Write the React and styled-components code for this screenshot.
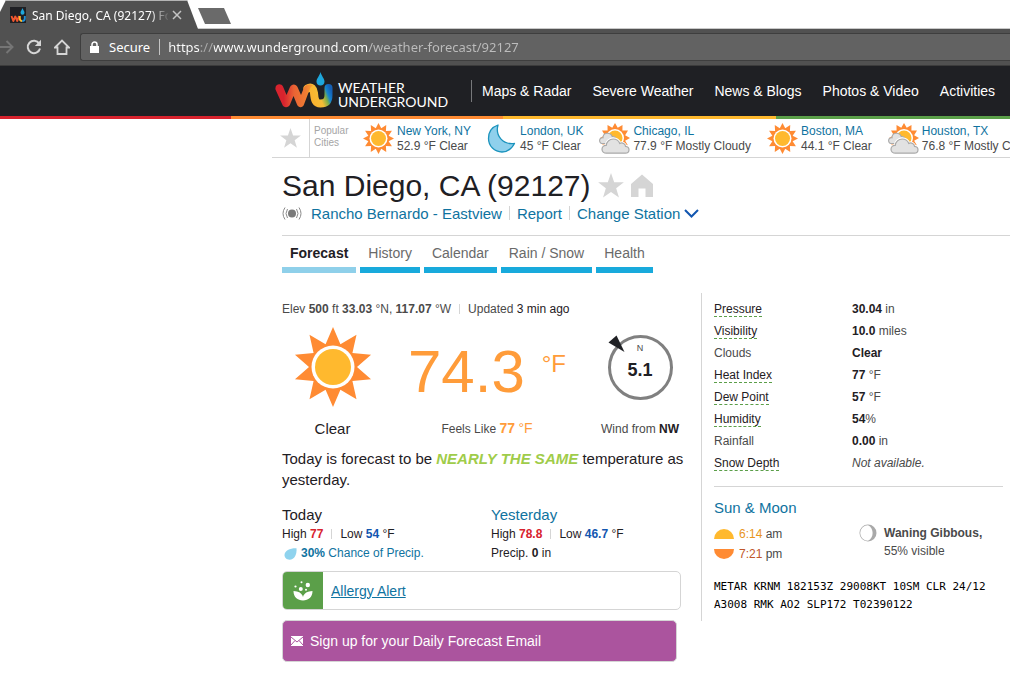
import React from 'react'

import styled, { createGlobalStyle } from 'styled-components'

const cities = [
    { name: 'New York, NY', now: '52.9 °F Clear', icon: 'sun' },
    { name: 'London, UK', now: '45 °F Clear', icon: 'moon' },
    { name: 'Chicago, IL', now: '77.9 °F Mostly Cloudy', icon: 'cloud' },
    { name: 'Boston, MA', now: '44.1 °F Clear', icon: 'sun' },
    { name: 'Houston, TX', now: '76.8 °F Mostly Cloudy', icon: 'cloud' },
]

const navItems = ['Maps & Radar', 'Severe Weather', 'News & Blogs', 'Photos & Video', 'Activities']

const tabs = ['Forecast', 'History', 'Calendar', 'Rain / Snow', 'Health']

const details = [
    { label: 'Pressure', value: '30.04', unit: ' in', help: true },
    { label: 'Visibility', value: '10.0', unit: ' miles', help: true },
    { label: 'Clouds', value: 'Clear', unit: '' },
    { label: 'Heat Index', value: '77', unit: ' °F', help: true },
    { label: 'Dew Point', value: '57', unit: ' °F', help: true },
    { label: 'Humidity', value: '54', unit: '%', help: true },
    { label: 'Rainfall', value: '0.00', unit: ' in' },
    { label: 'Snow Depth', missing: 'Not available.', help: true },
]

// star polygon with alternating outer and inner radius
function starPoints(cx, cy, outer, inner, count) {
    const points = []
    for (let i = 0; i < count * 2; i++) {
        const r = i % 2 ? inner : outer
        const a = (Math.PI * i) / count
        points.push(`${(cx + r * Math.sin(a)).toFixed(2)},${(cy - r * Math.cos(a)).toFixed(2)}`)
    }
    return points.join(' ')
}

function SunIcon({ size, rays, notch, ring, core }) {
    const c = size / 2
    return (
        <svg width={size} height={size} viewBox={`0 0 ${size} ${size}`} aria-hidden="true">
            <polygon points={starPoints(c, c, c, notch, rays)} fill="#ff8b33" />
            <circle cx={c} cy={c} r={ring} fill="#fff" />
            <circle cx={c} cy={c} r={core} fill="#ffb92e" />
        </svg>
    )
}

function MoonIcon() {
    return (
        <svg width="30" height="31" viewBox="0 0 30 31" aria-hidden="true">
            <path
                d="M11 2C8 13 16 22 27.500 20.500C24 27 19.500 29 15 29C7.500 29 1.500 23 1.500 15.500C1.500 9 5 4 11 2Z"
                fill="#8fd0ec"
                stroke="#1b93bd"
                strokeWidth="1.300"
                strokeLinejoin="round"
            />
        </svg>
    )
}

function CloudIcon() {
    return (
        <svg width="31" height="31" viewBox="0 0 31 31" aria-hidden="true">
            <polygon points={starPoints(16, 15, 15, 10.5, 12)} fill="#ff8b33" />
            <circle cx="16" cy="15" r="9" fill="#fff" />
            <circle cx="16" cy="15" r="7.5" fill="#ffb92e" />
            <path
                d="M4 20.500C1.500 20.500 0.500 19 0.600 17.400C0.800 15.500 2.300 14.500 4 14.800C4 12 6 10.200 8.500 10.200C11 10.200 12.500 11.500 13.200 13.500C15.500 13.200 17.500 15 17.500 17.500C17.500 20 16 24 12 25L-1 27V31H31V23Z"
                fill="#fff"
            />
            <path
                d="M4 20.500C1.500 20.500 0.600 19 0.600 17.400C0.800 15.500 2.300 14.500 4 14.800C4 12 6 10.200 8.500 10.200C11 10.200 12.500 11.500 13.200 13.500C15.500 13.200 17.300 15 17.300 17.300C17.300 19.300 15.500 20.500 14 20.500Z"
                fill="#e2e2e2"
                stroke="#a9a9a9"
                strokeWidth="1.100"
            />
            <path
                d="M7.500 30.200C4.700 30.200 3 28.500 3 26.200C3 23.800 4.800 22.200 7.200 22.400C7.500 18.800 10.500 16 14.200 16C17.300 16 19.700 17.700 20.800 20.400C23.500 19.200 26.300 20.800 26.500 23.300C28.800 23.500 30 25 30 26.700C30 28.800 28.500 30.200 26.200 30.200Z"
                fill="#e2e2e2"
                stroke="#fff"
                strokeWidth="3"
            />
            <path
                d="M7.500 30.200C4.700 30.200 3 28.500 3 26.200C3 23.800 4.800 22.200 7.200 22.400C7.500 18.800 10.500 16 14.200 16C17.300 16 19.700 17.700 20.800 20.400C23.500 19.200 26.300 20.800 26.500 23.300C28.800 23.500 30 25 30 26.700C30 28.800 28.500 30.200 26.200 30.200Z"
                fill="#e2e2e2"
                stroke="#a9a9a9"
                strokeWidth="1.200"
            />
        </svg>
    )
}

function CityIcon({ icon }) {
    if (icon === 'moon') return <MoonIcon />
    if (icon === 'cloud') return <CloudIcon />
    return <SunIcon size={31} rays={12} notch={10.5} ring={9} core={7.5} />
}

function LogoMark() {
    return (
        <svg width="58" height="37" viewBox="0 0 58 37" aria-hidden="true">
            <defs>
                <linearGradient id="logo-w" gradientUnits="userSpaceOnUse" x1="2" y1="0" x2="36" y2="0">
                    <stop offset="0" stopColor="#d8232e" />
                    <stop offset="0.200" stopColor="#d8232e" />
                    <stop offset="0.500" stopColor="#ea6334" />
                    <stop offset="0.850" stopColor="#ee7d33" />
                    <stop offset="1" stopColor="#f79a30" />
                </linearGradient>
                <linearGradient id="logo-u" gradientUnits="userSpaceOnUse" x1="36" y1="26" x2="56" y2="18">
                    <stop offset="0" stopColor="#fbb32f" />
                    <stop offset="0.400" stopColor="#f6bd35" />
                    <stop offset="0.650" stopColor="#7fae48" />
                    <stop offset="0.800" stopColor="#1585cf" />
                    <stop offset="1" stopColor="#1560b5" />
                </linearGradient>
            </defs>
            <path
                d="M32.500 16.500C36.500 14 38.500 17 39 21C39.500 28 40.500 31.500 45.500 31.500C51.500 31.500 53.500 28 53.500 23V16"
                fill="none"
                stroke="url(#logo-u)"
                strokeWidth="8"
                strokeLinecap="round"
            />
            <path
                d="M0.500 17.500C-0.500 12 6 10.500 8 14.500L11.500 23L15 15C16.500 11.500 21 11.500 22.500 15L26 23L29 15.500C30.500 12.500 35.500 11.500 38 13.500C35.500 14.500 35 17 33.500 20.500L29 32.500C27.800 36 23.500 36 22 32.500L18.500 24L15 32.500C13.500 36 8.500 36 7.300 32.500Z"
                fill="url(#logo-w)"
            />
            <path d="M45.500 0C46.500 4 49.500 6.500 49.500 9.500C49.500 12 47.800 13.500 45.500 13.500C43.200 13.500 41.500 12 41.500 9.500C41.500 6.500 44.500 4 45.500 0Z" fill="#1ea7dc" />
        </svg>
    )
}

function Favicon() {
    return (
        <svg width="16" height="16" viewBox="0 0 16 16" aria-hidden="true">
            <path d="M0 0H16V16H0Z" fill="#1f2024" />
            <path d="M1.500 9L3.300 14L5.300 9.500L7.300 14L9 9" fill="none" stroke="#f0562f" strokeWidth="1.900" strokeLinejoin="round" />
            <path d="M9.800 9V11.500Q9.800 14 12.200 14" fill="none" stroke="#ffb92e" strokeWidth="1.900" />
            <path d="M12.200 14Q14.800 14 14.800 11.500V9" fill="none" stroke="#1f8fd6" strokeWidth="1.900" />
            <path d="M12.500 1C13 3 14.500 4 14.500 5.700A2 2 0 0 1 10.500 5.700C10.500 4 12 3 12.500 1Z" fill="#1ea7dc" />
        </svg>
    )
}

function StarIcon({ size }) {
    return (
        <svg width={size} height={size} viewBox="0 0 24 24" aria-hidden="true">
            <polygon points={starPoints(12, 12.5, 12.5, 5, 5)} fill="#d5d5d5" />
        </svg>
    )
}

function Browser() {
    return (
        <>
            <TabStrip>
                <BrowserTab>
                    <Favicon />
                    <TabTitle>San Diego, CA (92127) Fo</TabTitle>
                    <IconButton aria-label="Close tab">
                        <svg width="10" height="10" viewBox="0 0 10 10">
                            <path d="M1 1L9 9M9 1L1 9" stroke="#c4c4c4" strokeWidth="1.500" />
                        </svg>
                    </IconButton>
                </BrowserTab>
                <NewTab aria-label="New tab" />
            </TabStrip>
            <Toolbar>
                <IconButton aria-label="Forward">
                    <svg width="14" height="16" viewBox="0 0 14 16">
                        <path d="M0 8H12.500M6.500 2L12.500 8L6.500 14" fill="none" stroke="#757575" strokeWidth="2" />
                    </svg>
                </IconButton>
                <IconButton aria-label="Reload">
                    <svg width="16" height="16" viewBox="0 0 16 16">
                        <path d="M13.200 4.600A6.200 6.200 0 1 0 14 9.500" fill="none" stroke="#d6d6d6" strokeWidth="2" />
                        <path d="M15 0.800V7H8.800Z" fill="#d6d6d6" />
                    </svg>
                </IconButton>
                <IconButton aria-label="Home">
                    <svg width="16" height="16" viewBox="0 0 16 16">
                        <path d="M1 8.500L8 1.500L15 8.500H12.500V15H3.500V8.500Z" fill="none" stroke="#d6d6d6" strokeWidth="1.800" />
                    </svg>
                </IconButton>
                <AddressBar>
                    <svg width="9" height="12" viewBox="0 0 9 12" aria-hidden="true">
                        <path d="M0 5H9V12H0Z" fill="#fff" />
                        <path d="M2 5.500V3.500A2.500 2.500 0 0 1 7 3.500V5.500" fill="none" stroke="#fff" strokeWidth="1.500" />
                    </svg>
                    <Secure htmlFor="address">Secure</Secure>
                    <Address id="address" defaultValue="https://www.wunderground.com/weather-forecast/92127" />
                </AddressBar>
            </Toolbar>
        </>
    )
}

function SiteHeader() {
    return (
        <Header>
            <Logo href="#">
                <LogoMark />
                <LogoText>
                    WEATHER
                    <br />
                    UNDERGROUND
                </LogoText>
            </Logo>
            <Nav>
                {navItems.map((item) => (
                    <a href="#" key={item}>{item}</a>
                ))}
            </Nav>
        </Header>
    )
}

function CityTicker() {
    return (
        <Ticker>
            <Favourites aria-label="Favourites">
                <StarIcon size={21} />
            </Favourites>
            <TickerLabel>
                Popular
                <br />
                Cities
            </TickerLabel>
            <CityList>
                {cities.map((city) => (
                    <City key={city.name}>
                        <CityIcon icon={city.icon} />
                        <div>
                            <a href="#">{city.name}</a>
                            <p>{city.now}</p>
                        </div>
                    </City>
                ))}
            </CityList>
        </Ticker>
    )
}

function Conditions() {
    return (
        <Current>
            <Elevation>
                <span>Elev <b>500</b> ft <b>33.03</b> °N, <b>117.07</b> °W</span>
                <Bar />
                <span>Updated <Dark>3 min ago</Dark></span>
            </Elevation>
            <Readings>
                <SunIcon size={80} rays={10} notch={24} ring={21.5} core={18} />
                <Temp>74.3<sup>°F</sup></Temp>
                <Dial>
                    <Arrow width="17" height="18" viewBox="0 0 17 18" aria-hidden="true">
                        <polygon points="8.500,0.500 0.500,7.500 16.500,17" fill="#1f2024" />
                    </Arrow>
                    <span>N</span>
                    <strong>5.1</strong>
                </Dial>
                <Sky>Clear</Sky>
                <Feels>Feels Like <b>77</b> <i>°F</i></Feels>
                <Wind>Wind from <b>NW</b></Wind>
            </Readings>
            <Outlook>
                Today is forecast to be <em>NEARLY THE SAME</em> temperature as yesterday.
            </Outlook>
            <Days>
                <Day>
                    <h3>Today</h3>
                    <p>High <Hot>77</Hot><Bar />Low <Cold>54</Cold> °F</p>
                    <Precip href="#">
                        <svg width="13" height="12" viewBox="0 0 13 12" aria-hidden="true">
                            <path d="M12.500 0.300C13 6.500 10.500 11.700 5.500 11.700C2.500 11.700 0.500 9.700 0.500 7C0.500 2.500 6.500 0 12.500 0.300Z" fill="#8fd3ee" />
                        </svg>
                        <span><b>30%</b> Chance of Precip.</span>
                    </Precip>
                </Day>
                <Day>
                    <h3><a href="#">Yesterday</a></h3>
                    <p>High <Hot>78.8</Hot><Bar />Low <Cold>46.7</Cold> °F</p>
                    <p>Precip. <b>0</b> in</p>
                </Day>
            </Days>
            <Allergy>
                <AllergyIcon>
                    <svg width="20" height="20" viewBox="0 0 20 20" aria-hidden="true">
                        <path d="M0.500 10C5.500 10.300 9 12 10 16C11 12 14.500 10.300 19.500 10C19.500 16 15.500 19.500 10 19.500C4.500 19.500 0.500 16 0.500 10Z" fill="#fff" />
                        <circle cx="14.800" cy="4" r="2.200" fill="#fff" />
                        <circle cx="8.500" cy="1.300" r="1" fill="#fff" />
                        <circle cx="2.500" cy="5.500" r="1.100" fill="#fff" />
                        <circle cx="7.800" cy="8" r="2" fill="#fff" />
                        <circle cx="13" cy="8.700" r="1" fill="#fff" />
                    </svg>
                </AllergyIcon>
                <a href="#">Allergy Alert</a>
            </Allergy>
            <SignUp>
                <svg width="12" height="10" viewBox="0 0 12 10" aria-hidden="true">
                    <path d="M0 0H12V10H0Z" fill="#fff" />
                    <path d="M0 1L6 6L12 1M0 9L4 4.500M12 9L8 4.500" fill="none" stroke="#ab549e" />
                </svg>
                Sign up for your Daily Forecast Email
            </SignUp>
        </Current>
    )
}

function Details() {
    return (
        <Side>
            <DetailTable>
                <tbody>
                    {details.map((row) => (
                        <tr key={row.label}>
                            <th scope="row">{row.help ? <Help>{row.label}</Help> : row.label}</th>
                            <td>{row.missing ? <i>{row.missing}</i> : <><b>{row.value}</b>{row.unit}</>}</td>
                        </tr>
                    ))}
                </tbody>
            </DetailTable>
            <SunMoon>
                <h3><a href="#">Sun &amp; Moon</a></h3>
                <div>
                    <SunTime $color="#e8951c">
                        <svg width="20" height="10" viewBox="0 0 20 10" aria-hidden="true">
                            <path d="M0 10A10 10 0 0 1 20 10Z" fill="#ffb92e" />
                        </svg>
                        <span><b>6:14</b> am</span>
                    </SunTime>
                    <SunTime $color="#c0562a">
                        <svg width="20" height="10" viewBox="0 0 20 10" aria-hidden="true">
                            <path d="M0 0A10 10 0 0 0 20 0Z" fill="#ff8b33" />
                        </svg>
                        <span><b>7:21</b> pm</span>
                    </SunTime>
                </div>
                <Phase>
                    <svg width="18" height="18" viewBox="0 0 18 18" aria-hidden="true">
                        <circle cx="9" cy="9" r="8.500" fill="#a9a9a9" />
                        <path d="M9 1.200A7.800 7.800 0 0 0 9 16.800C15.200 14 15.200 4 9 1.200Z" fill="#fff" />
                    </svg>
                    <p><b>Waning Gibbous,</b><br />55% visible</p>
                </Phase>
            </SunMoon>
            <Metar>METAR KRNM 182153Z 29008KT 10SM CLR 24/12 A3008 RMK AO2 SLP172 T02390122</Metar>
        </Side>
    )
}

function App() {
    return (
        <>
            <GlobalStyle />
            <Browser />
            <SiteHeader />
            <CityTicker />
            <Main>
                <TitleRow>
                    <h1>San Diego, CA (92127)</h1>
                    <IconButton aria-label="Add to favourites"><StarIcon size={26} /></IconButton>
                    <IconButton aria-label="Set as home">
                        <svg width="22" height="24" viewBox="0 0 22 24">
                            <path d="M11 0.500L22 10V23H14.500V14.500H7.500V23H0V10Z" fill="#d5d5d5" />
                        </svg>
                    </IconButton>
                </TitleRow>
                <Station>
                    <svg width="20" height="14" viewBox="0 0 20 14" aria-hidden="true">
                        <circle cx="10" cy="7.500" r="4" fill="#7a7a7a" />
                        <path d="M3 1.500Q-1 7.500 3 13.500M5.500 3Q2.500 7.500 5.500 12M17 1.500Q21 7.500 17 13.500M14.500 3Q17.500 7.500 14.500 12" fill="none" stroke="#8a8a8a" />
                    </svg>
                    <a href="#">Rancho Bernardo - Eastview</a>
                    <Bar />
                    <a href="#">Report</a>
                    <Bar />
                    <a href="#">
                        Change Station
                        <svg width="15" height="9" viewBox="0 0 15 9" aria-hidden="true">
                            <path d="M1 1L7.500 7.500L14 1" fill="none" stroke="#1256b0" strokeWidth="2" />
                        </svg>
                    </a>
                </Station>
                <Tabs role="tablist">
                    {tabs.map((tab, i) => (
                        <Tab key={tab} role="tab" aria-selected={i === 0} $active={i === 0}>{tab}</Tab>
                    ))}
                </Tabs>
                <Columns>
                    <Conditions />
                    <Details />
                </Columns>
            </Main>
        </>
    )
}

const GlobalStyle = createGlobalStyle`
    * {
        box-sizing: border-box;
    }

    body {
        margin: 0;
        background: #fff;
        color: #4a4a4a;
        font-family: "Liberation Sans", Arial, sans-serif;
        font-size: 12px;
        overflow-x: hidden;
    }

    h1, h3, p {
        margin: 0;
        font-weight: normal;
    }

    a {
        color: #0f73a0;
        text-decoration: none;
    }

    button {
        font-family: inherit;
        cursor: pointer;
    }

    svg {
        display: block;
        flex: none;
    }
`

const IconButton = styled.button`
    display: flex;
    padding: 0;
    border: 0;
    background: none;
`

const TabStrip = styled.div`
    display: flex;
    height: 29px;
    border-bottom: 1px solid #c9c9c9;
`

const BrowserTab = styled.div`
    display: flex;
    align-items: center;
    width: 198px;
    height: 29px;
    padding: 0 16px 0 10px;
    background: #515151;
    border-top: 1px solid #b5b5b5;
    clip-path: polygon(6px 0, 187px 0, 100% 100%, 0 100%, 0 12px);
`

const TabTitle = styled.span`
    width: 136px;
    margin: 0 4px 0 6px;
    overflow: hidden;
    white-space: nowrap;
    color: #fff;
    font-family: "Noto Sans", sans-serif;
    font-size: 12px;
    mask-image: linear-gradient(to right, #000 118px, transparent 138px);
`

const NewTab = styled.button`
    width: 33px;
    height: 16px;
    margin-top: 8px;
    padding: 0;
    border: 0;
    background: #6a6a6a;
    clip-path: polygon(0 0, 26px 0, 100% 100%, 7px 100%);
`

const Toolbar = styled.div`
    display: flex;
    align-items: center;
    gap: 12px;
    height: 37px;
    background: #515151;
    border-bottom: 1px solid #3c3c3c;
    overflow: hidden;
`

const AddressBar = styled.div`
    display: flex;
    flex: 1;
    align-items: center;
    height: 28px;
    margin-left: -2px;
    padding-left: 9px;
    background: #626262;
    border: 1px solid #3e3e3e;
    border-right: 0;
    border-radius: 3px 0 0 3px;
    font-family: "Noto Sans", sans-serif;
    font-size: 13px;
`

const Secure = styled.label`
    margin-left: 10px;
    padding-right: 9px;
    border-right: 1px solid #c4c4c4;
    color: #fff;
    line-height: 16px;
`

const Address = styled.input`
    flex: 1;
    padding: 0 0 0 8px;
    border: 0;
    outline: 0;
    font: inherit;
    color: transparent;
    background: linear-gradient(to right, #fff 40px, #aaa 40px, #aaa 54px, #fff 54px, #fff 208px, #bdbdbd 208px);
    background-clip: text;
`

const Header = styled.header`
    display: flex;
    align-items: center;
    height: 53px;
    padding-left: 275px;
    background: #1f2024;
    border-bottom: 3px solid;
    border-image: linear-gradient(
        to right,
        #d8232e 22.9%,
        #ff8b33 22.9%,
        #ff8b33 49.8%,
        #ffb92e 49.8%,
        #ffb92e 76.8%,
        #5b9f49 76.8%
    ) 1;
    white-space: nowrap;
`

const Logo = styled.a`
    display: flex;
    align-items: flex-end;
    width: 196px;
    gap: 5px;
    padding-bottom: 2px;
`

const LogoText = styled.span`
    color: #fff;
    font-family: Lato, sans-serif;
    font-size: 14px;
    line-height: 14px;
`

const Nav = styled.nav`
    display: flex;
    gap: 21px;
    padding-left: 10px;
    border-left: 1px solid #77787b;

    a {
        color: #fff;
        font-size: 14px;
        line-height: 22px;
    }
`

const Ticker = styled.section`
    display: flex;
    height: 39px;
    margin-left: 272px;
    border-bottom: 1px solid #d5d5d5;
    white-space: nowrap;
    overflow: hidden;
`

const Favourites = styled.button`
    display: flex;
    flex: none;
    align-items: center;
    justify-content: center;
    width: 38px;
    padding: 0;
    border: 0;
    border-right: 1px solid #d5d5d5;
    background: none;
`

const TickerLabel = styled.p`
    flex: none;
    width: 53px;
    padding: 6px 0 0 4px;
    color: #a5a5a5;
    font-size: 10px;
    line-height: 12px;
`

const CityList = styled.div`
    display: flex;
    align-items: center;
    gap: 16px;
    padding-top: 1px;
`

const City = styled.div`
    display: flex;
    align-items: center;
    gap: 3px;
    line-height: 15px;
`

const Main = styled.main`
    padding: 10px 0 0 282px;
`

const TitleRow = styled.div`
    display: flex;
    align-items: center;
    gap: 7px;

    h1 {
        color: #1f2024;
        font-size: 30px;
        line-height: 36px;
    }
`

const Bar = styled.span`
    display: inline-block;
    width: 1px;
    height: 10px;
    margin: 0 8px;
    background: #d5d5d5;
    vertical-align: -1px;
`

const Station = styled.div`
    display: flex;
    align-items: center;
    height: 18px;
    font-size: 15px;

    > svg {
        margin-right: 9px;
    }

    a {
        display: flex;
        align-items: center;
        gap: 4px;
    }

    ${Bar} {
        height: 14px;
        margin: 0 7px;
    }
`

const Tabs = styled.div`
    display: flex;
    gap: 4px;
    margin-top: 13px;
    border-top: 1px solid #d5d5d5;
`

const Tab = styled.button`
    height: 37px;
    padding: 2px 8px 0;
    border: 0;
    border-bottom: 6px solid ${(props) => (props.$active ? '#8fd0ea' : '#18aadc')};
    background: none;
    color: ${(props) => (props.$active ? '#1f2024' : '#6a6a6a')};
    font-size: 14px;
    font-weight: ${(props) => (props.$active ? 'bold' : 'normal')};
    line-height: 16px;
`

const Columns = styled.div`
    display: grid;
    grid-template-columns: 399px minmax(0, 1fr);
    gap: 20px;
    align-items: start;
    margin-top: 20px;
`

const Current = styled.section`
    padding-top: 7px;
`

const Elevation = styled.p`
    line-height: 18px;
`

const Dark = styled.span`
    color: #1f2024;
`

const Readings = styled.div`
    display: grid;
    grid-template-columns: 101px 1fr 82px;
    justify-items: center;
    align-items: center;
    margin-top: 9px;
    row-gap: 11px;
`

const Temp = styled.p`
    display: flex;
    gap: 17px;
    padding: 10px 8px 0 0;
    color: #ff9c3a;
    font-size: 60px;
    line-height: 70px;

    sup {
        font-size: 24px;
        line-height: 54px;
    }
`

const Dial = styled.div`
    position: relative;
    display: flex;
    flex-direction: column;
    align-items: center;
    width: 65px;
    height: 65px;
    padding-top: 5px;
    border: 3px solid #808080;
    border-radius: 50%;

    span {
        font-size: 9px;
        line-height: 10px;
    }

    strong {
        margin-top: 7px;
        color: #1f2024;
        font-size: 18px;
        line-height: 20px;
    }
`

// sits over the ring, on the side the wind comes from
const Arrow = styled.svg`
    position: absolute;
    top: -3px;
    left: -3px;
`

const Sky = styled.p`
    color: #1f2024;
    font-size: 15px;
    line-height: 20px;
`

const Feels = styled.p`
    padding-right: 8px;
    line-height: 20px;

    b, i {
        color: #ff9c3a;
        font-size: 14px;
    }

    i {
        font-style: normal;
    }
`

const Wind = styled.p`
    white-space: nowrap;
    line-height: 20px;

    b {
        color: #1f2024;
    }
`

const Outlook = styled.p`
    margin: 9px -10px 0 0;
    color: #1f2024;
    font-size: 15px;
    line-height: 21px;

    em {
        color: #9fcc4a;
        font-weight: bold;
    }
`

const Days = styled.div`
    display: grid;
    grid-template-columns: 209px 1fr;
    margin-top: 14px;
`

const Day = styled.div`
    color: #1f2024;
    line-height: 19px;

    h3 {
        font-size: 15px;
        line-height: 21px;
    }
`

const Hot = styled.b`
    color: #d8232e;
`

const Cold = styled.b`
    color: #1256b0;
`

const Precip = styled.a`
    display: flex;
    align-items: center;
    gap: 4px;
    padding-left: 2px;
`

const Allergy = styled.div`
    display: flex;
    align-items: center;
    gap: 8px;
    height: 39px;
    margin-top: 8px;
    border: 1px solid #d5d5d5;
    border-radius: 5px;
    overflow: hidden;

    a {
        font-size: 14px;
        text-decoration: underline;
    }
`

const AllergyIcon = styled.span`
    display: flex;
    align-items: center;
    justify-content: center;
    width: 40px;
    height: 100%;
    background: #5b9f49;
`

const SignUp = styled.button`
    display: flex;
    align-items: center;
    gap: 7px;
    width: 99%;
    height: 42px;
    margin-top: 10px;
    padding: 0 8px;
    border: 1px solid #d5d5d5;
    border-radius: 5px;
    background: #ab549e;
    color: #fff;
    font-size: 14px;
`

const Side = styled.aside`
    padding: 5px 7px 7px 12px;
    border-left: 1px solid #d5d5d5;
`

const DetailTable = styled.table`
    width: 100%;
    border-collapse: collapse;

    th, td {
        height: 22px;
        padding: 0;
        font-weight: normal;
        text-align: left;
        line-height: 14px;
    }

    th {
        width: 138px;
    }

    b {
        color: #1f2024;
    }
`

const Help = styled.span`
    border-bottom: 1px dashed #5b9f49;
    color: #1f2024;
`

const SunMoon = styled.div`
    display: grid;
    grid-template-columns: 145px 1fr;
    margin-top: 12px;
    padding-top: 11px;
    border-top: 1px solid #d5d5d5;

    h3 {
        grid-column: 1 / -1;
        margin-bottom: 6px;
        font-size: 15px;
        line-height: 20px;
    }
`

const SunTime = styled.p`
    display: flex;
    align-items: center;
    gap: 5px;
    line-height: 20px;

    b {
        color: ${(props) => props.$color};
        font-weight: normal;
    }
`

const Phase = styled.div`
    display: flex;
    gap: 7px;
    line-height: 18px;
`

const Metar = styled.p`
    margin-top: 14px;
    color: #000;
    font-family: "DejaVu Sans Mono", monospace;
    font-size: 11px;
    line-height: 18px;
`

export default App
